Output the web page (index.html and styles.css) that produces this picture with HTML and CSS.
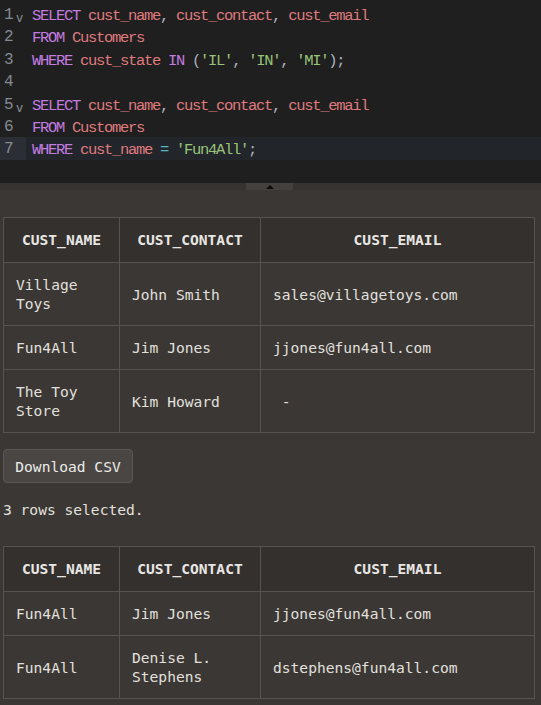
FILE: index.html
```html
<!DOCTYPE html>
<html>
<head>
<meta charset="utf-8">
<link rel="stylesheet" href="styles.css">
</head>
<body>
<div class="editor">
  <div class="line"><div class="gutter"><span class="num">1</span><span class="fold">v</span></div><div class="code"><span class="kw">SELECT</span> <span class="id">cust_name</span><span class="p">,</span> <span class="id">cust_contact</span><span class="p">,</span> <span class="id">cust_email</span></div></div>
  <div class="line"><div class="gutter"><span class="num">2</span></div><div class="code"><span class="kw">FROM</span> <span class="id">Customers</span></div></div>
  <div class="line"><div class="gutter"><span class="num">3</span></div><div class="code"><span class="kw">WHERE</span> <span class="id">cust_state</span> <span class="kw">IN</span> <span class="p">(</span><span class="str">'IL'</span><span class="p">,</span> <span class="str">'IN'</span><span class="p">,</span> <span class="str">'MI'</span><span class="p">);</span></div></div>
  <div class="line"><div class="gutter"><span class="num">4</span></div><div class="code"> </div></div>
  <div class="line"><div class="gutter"><span class="num">5</span><span class="fold">v</span></div><div class="code"><span class="kw">SELECT</span> <span class="id">cust_name</span><span class="p">,</span> <span class="id">cust_contact</span><span class="p">,</span> <span class="id">cust_email</span></div></div>
  <div class="line"><div class="gutter"><span class="num">6</span></div><div class="code"><span class="kw">FROM</span> <span class="id">Customers</span></div></div>
  <div class="line active"><div class="gutter"><span class="num">7</span></div><div class="code"><span class="kw">WHERE</span> <span class="id">cust_name</span> <span class="op">=</span> <span class="str">'Fun4All'</span><span class="p">;</span></div></div>
</div>
<div class="divider"><div class="handle"><span class="tri"></span></div></div>
<div class="results">
  <table class="grid">
    <thead>
      <tr><th class="c1">CUST_NAME</th><th class="c2">CUST_CONTACT</th><th class="c3">CUST_EMAIL</th></tr>
    </thead>
    <tbody>
      <tr><td>Village<br>Toys</td><td>John Smith</td><td>sales@villagetoys.com</td></tr>
      <tr><td>Fun4All</td><td>Jim Jones</td><td>jjones@fun4all.com</td></tr>
      <tr><td>The Toy<br>Store</td><td>Kim Howard</td><td>&nbsp;-</td></tr>
    </tbody>
  </table>
  <button class="btn">Download CSV</button>
  <div class="status">3 rows selected.</div>
  <table class="grid">
    <thead>
      <tr><th class="c1">CUST_NAME</th><th class="c2">CUST_CONTACT</th><th class="c3">CUST_EMAIL</th></tr>
    </thead>
    <tbody>
      <tr><td>Fun4All</td><td>Jim Jones</td><td>jjones@fun4all.com</td></tr>
      <tr><td>Fun4All</td><td>Denise L.<br>Stephens</td><td>dstephens@fun4all.com</td></tr>
    </tbody>
  </table>
</div>
</body>
</html>
```
FILE: styles.css
```css
html, body {
  margin: 0;
  padding: 0;
  background: #3b3734;
  height: 100%;
}
body {
  overflow: hidden;
}
.editor {
  background: #1f1f1f;
  height: 183px;
  box-sizing: border-box;
  padding-top: 3px;
  font-family: "Liberation Mono", monospace;
  font-size: 15.5px;
  letter-spacing: -1.3px;
}
.line {
  display: flex;
  height: 22.4px;
  line-height: 22.4px;
}
.gutter {
  width: 26px;
  flex: none;
  position: relative;
  color: #858a93;
  padding-left: 4px;
  padding-top: 1px;
  box-sizing: border-box;
  font-size: 16px;
  letter-spacing: 0;
}
.fold {
  position: absolute;
  left: 16px;
  top: 5px;
  font-size: 12px;
  color: #8a8f98;
}
.code {
  padding-left: 6px;
  padding-top: 2px;
  white-space: pre;
  flex: 1;
}
.active {
  background: #22252a;
}
.active .gutter {
  background: #2b2e35;
}
.kw { color: #c27ce0; }
.id { color: #df7a7e; }
.p { color: #abb2bf; }
.str { color: #98c379; }
.op { color: #56b6c2; }

.divider {
  height: 7px;
  background: #363330;
  display: flex;
  justify-content: center;
}
.handle {
  width: 47px;
  height: 7px;
  background: #43403d;
  display: flex;
  align-items: center;
  justify-content: center;
  margin-left: -2px;
}
.tri {
  width: 0;
  height: 0;
  border-left: 4px solid transparent;
  border-right: 4px solid transparent;
  border-bottom: 4px solid #0c0c0c;
}
.results {
  padding: 27px 0 0 3px;
  font-family: "DejaVu Sans Mono", monospace;
  font-size: 14.6px;
  color: #e2e0de;
}
.grid {
  border-collapse: collapse;
  width: 532px;
  table-layout: fixed;
}
.grid th, .grid td {
  border: 1px solid #57534f;
  padding: 12px 12px;
  line-height: 19px;
  text-align: left;
  vertical-align: middle;
}
.grid th {
  background: #33302d;
  font-weight: bold;
  text-align: center;
  padding: 12px 12px 13px;
  color: #e8e6e3;
}
.c1 { width: 91px; }
.c2 { width: 116px; }
.btn {
  display: block;
  margin-top: 16px;
  height: 34px;
  width: 130px;
  background: #4a4643;
  border: 1px solid #5b5753;
  border-radius: 4px;
  color: #ecebe9;
  font-family: "DejaVu Sans Mono", monospace;
  font-size: 14.6px;
  padding: 0;
}
.status {
  margin-top: 17px;
  line-height: 19px;
  margin-bottom: 27px;
}
```
